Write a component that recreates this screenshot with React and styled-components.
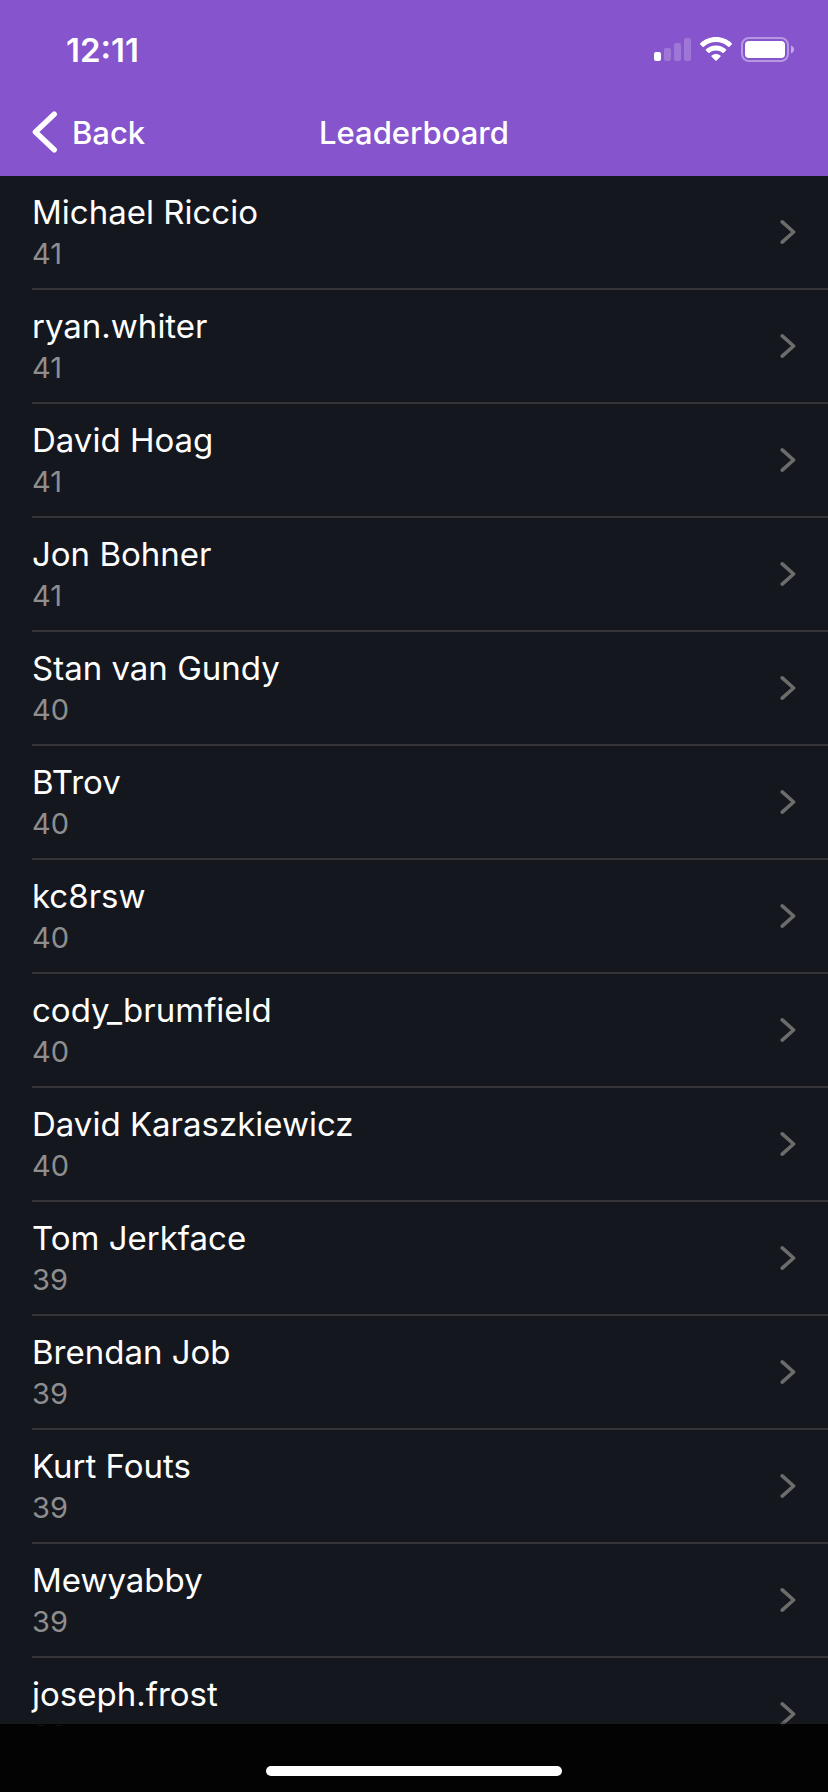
import React from "react";
import styled, { createGlobalStyle } from "styled-components";

const players = [
  { name: "Michael Riccio", score: 41 },
  { name: "ryan.whiter", score: 41 },
  { name: "David Hoag", score: 41 },
  { name: "Jon Bohner", score: 41 },
  { name: "Stan van Gundy", score: 40 },
  { name: "BTrov", score: 40 },
  { name: "kc8rsw", score: 40 },
  { name: "cody_brumfield", score: 40 },
  { name: "David Karaszkiewicz", score: 40 },
  { name: "Tom Jerkface", score: 39 },
  { name: "Brendan Job", score: 39 },
  { name: "Kurt Fouts", score: 39 },
  { name: "Mewyabby", score: 39 },
  { name: "joseph.frost", score: 39 },
];

function SignalIcon() {
  return (
    <svg width="37" height="26" viewBox="0 0 37 26" fill="#fff">
      <rect x="0" y="15" width="7" height="9" rx="2" />
      <rect x="10" y="11" width="7" height="13" rx="2" opacity="0.2" />
      <rect x="20" y="6" width="7" height="18" rx="2" opacity="0.2" />
      <rect x="30" y="1" width="7" height="23" rx="2" opacity="0.2" />
    </svg>
  );
}

function WifiIcon() {
  return (
    <svg width="32" height="26" viewBox="0 0 32 26" fill="#fff">
      <path d="M16 0C22.2 0 27.8 2.4 31.7 6.2Q32.3 6.9 31.7 7.5L29.5 9.7Q28.9 10.3 28.2 9.7C25 6.8 20.7 5.1 16 5.1S7 6.8 3.8 9.7Q3.1 10.3 2.5 9.7L0.3 7.5Q-0.3 6.9 0.3 6.2C4.2 2.4 9.8 0 16 0Z" />
      <path d="M16 8.5C19.9 8.5 23.4 9.9 26 12.3Q26.6 12.9 26 13.5L23.7 15.7Q23.1 16.3 22.4 15.7C20.7 14.3 18.5 13.5 16 13.5S11.3 14.3 9.6 15.7Q8.9 16.3 8.3 15.7L6 13.5Q5.4 12.9 6 12.3C8.6 9.9 12.1 8.5 16 8.5Z" />
      <path d="M16 17C17.7 17 19.2 17.6 20.4 18.5Q21 19.1 20.4 19.7L16.6 23.5Q16 24 15.4 23.5L11.6 19.7Q11 19.1 11.6 18.5C12.8 17.6 14.3 17 16 17Z" />
    </svg>
  );
}

function BatteryIcon() {
  return (
    <svg width="53" height="26" viewBox="0 0 53 26" fill="none">
      <rect
        x="1"
        y="1"
        width="46"
        height="23"
        rx="7"
        stroke="#fff"
        strokeOpacity="0.4"
        strokeWidth="2"
      />
      <rect x="4" y="4" width="40" height="17" rx="4" fill="#fff" />
      <path d="M50 8.5C52 9.4 53 10.8 53 12.5S52 15.6 50 16.5Z" fill="#fff" opacity="0.5" />
    </svg>
  );
}

function App() {
  return (
    <>
      <GlobalStyle />
      <Screen>
        <Header>
          <StatusBar>
            <Time>12:11</Time>
            <StatusIcons>
              <SignalIcon />
              <WifiIcon />
              <BatteryIcon />
            </StatusIcons>
          </StatusBar>
          <NavBar>
            <BackButton type="button">
              <svg width="25" height="42" viewBox="0 0 25 42" fill="none">
                <path
                  d="M22.2 3.2L3.4 21L22.2 38.8"
                  stroke="#fff"
                  strokeWidth="5.4"
                  strokeLinecap="round"
                  strokeLinejoin="round"
                />
              </svg>
              Back
            </BackButton>
            <Title>Leaderboard</Title>
          </NavBar>
        </Header>
        <List>
          {players.map((player) => (
            <Item key={player.name}>
              <Row href="#">
                <Info>
                  <Name>{player.name}</Name>
                  <Score>{player.score}</Score>
                </Info>
                <svg width="16" height="24" viewBox="0 0 16 24" fill="none">
                  <path
                    d="M2.2 1.9L13.6 12L2.2 22.1"
                    stroke="#6c6c6c"
                    strokeWidth="3.6"
                    strokeLinecap="round"
                    strokeLinejoin="round"
                  />
                </svg>
              </Row>
            </Item>
          ))}
        </List>
        <BottomBar>
          <HomeIndicator />
        </BottomBar>
      </Screen>
    </>
  );
}

const GlobalStyle = createGlobalStyle`
  * {
    box-sizing: border-box;
  }
  body {
    margin: 0;
    background: #14171e;
    color: #fff;
    font-family: Inter, "Liberation Sans", sans-serif;
  }
`;

const Screen = styled.div`
  height: 100vh;
  display: flex;
  flex-direction: column;
`;

const Header = styled.header`
  flex: none;
  background: #8654cd;
`;

const StatusBar = styled.div`
  height: 88px;
  padding: 12px 34px 0 66px;
  display: flex;
  justify-content: space-between;
  align-items: center;
`;

const Time = styled.span`
  font-size: 33px;
  font-weight: 600;
`;

const StatusIcons = styled.div`
  display: flex;
  align-items: center;
  gap: 9px;
`;

const NavBar = styled.nav`
  height: 88px;
  padding: 0 32px;
  display: grid;
  grid-template-columns: 1fr auto 1fr;
  align-items: center;
`;

const BackButton = styled.button`
  justify-self: start;
  display: flex;
  align-items: center;
  gap: 15px;
  padding: 0;
  border: none;
  background: none;
  color: #fff;
  font-family: inherit;
  font-size: 31px;
  font-weight: 500;
  cursor: pointer;
`;

const Title = styled.h1`
  margin: 0;
  font-size: 31px;
  font-weight: 500;
`;

const List = styled.ul`
  flex: 1;
  min-height: 0;
  margin: 0;
  padding: 0;
  list-style: none;
  overflow-y: auto;
  scrollbar-width: none;
`;

const Item = styled.li`
  padding-left: 32px;
`;

const Row = styled.a`
  height: 114px;
  padding-right: 32px;
  border-bottom: 2px solid #353538;
  display: flex;
  justify-content: space-between;
  align-items: center;
  color: inherit;
  text-decoration: none;
`;

const Info = styled.div`
  display: flex;
  flex-direction: column;
`;

const Name = styled.span`
  font-size: 33px;
  line-height: 44px;
`;

const Score = styled.span`
  color: #8e8e8e;
  font-size: 29px;
  line-height: 40px;
`;

/* sits over the end of the list */
const BottomBar = styled.footer`
  position: fixed;
  left: 0;
  right: 0;
  bottom: 0;
  height: 68px;
  padding-bottom: 16px;
  border-top: 2px solid rgba(0, 0, 0, 0.85);
  background: #030304;
  background-clip: padding-box;
  box-shadow: 0 -2px 0 rgba(30, 26, 22, 0.3);
  display: flex;
  justify-content: center;
  align-items: flex-end;
`;

const HomeIndicator = styled.div`
  width: 296px;
  height: 10px;
  border-radius: 5px;
  background: #fff;
`;

export default App;
